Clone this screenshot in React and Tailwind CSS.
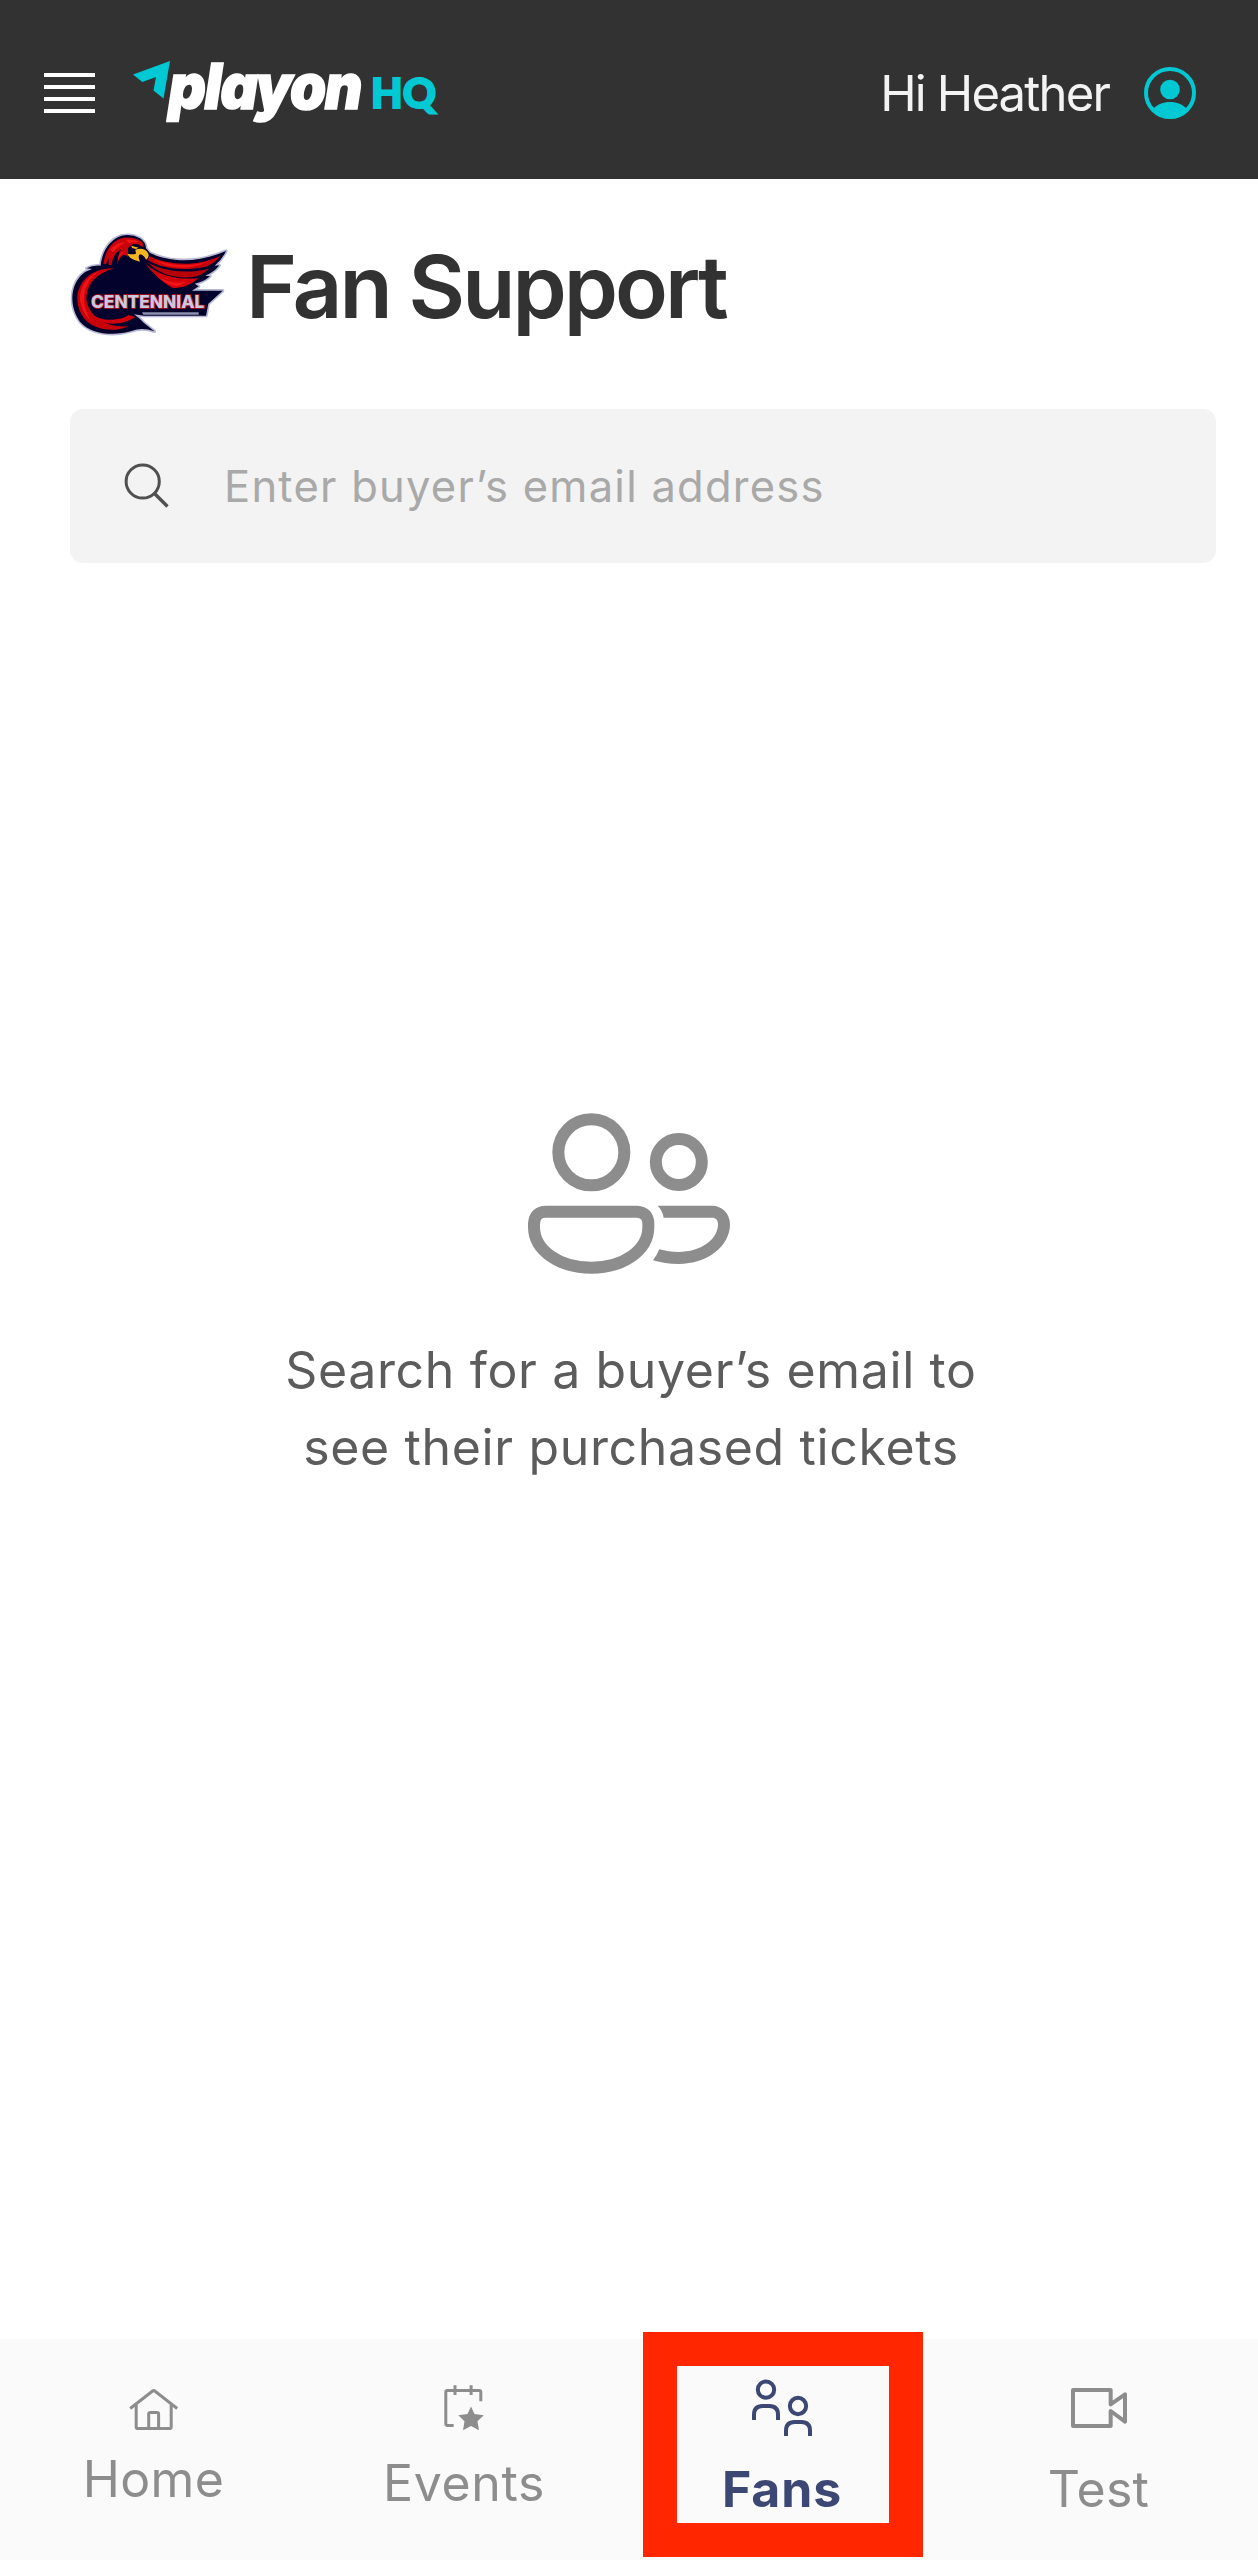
import React from "react";

function PlayonLogo() {
  return (
    <svg className="overflow-visible" width="308" height="100" viewBox="132 42 308 100" role="img" aria-label="playon HQ">
      <path d="M133 73.5 170 60 163.5 97.5 153.5 89.5 156 76 142.3 81Z" fill="#00c9d3" />
      <text
        x="168.500"
        y="0"
        transform="translate(0 108) scale(1 1.080)"
        textLength="194"
        lengthAdjust="spacing"
        className="font-['Inter'] text-[58px] font-black italic"
        fill="#fff"
        stroke="#fff"
        strokeWidth="1.500"
      >
        playon
      </text>
      <text
        x="371"
        y="107"
        textLength="65"
        lengthAdjust="spacing"
        className="font-['Lato'] text-[41px] font-black"
        fill="#00c9d3"
        stroke="#00c9d3"
        strokeWidth="2"
      >
        HQ
      </text>
    </svg>
  );
}

function UserIcon() {
  return (
    <svg width="52" height="52" viewBox="0 0 52 52" fill="#00c9d3">
      <circle cx="26" cy="26" r="24" fill="none" stroke="#00c9d3" strokeWidth="4" />
      <circle cx="26" cy="22.5" r="9.8" />
      <path d="M9 42C17 32.500 35 32.500 43 42C34 54 18 54 9 42Z" />
    </svg>
  );
}

function SchoolLogo() {
  const body =
    "M122 122C126 80 148 44 185 32Q215 26 240 40Q258 52 258 70L270 84C330 112 410 116 498 78Q486 104 464 122L478 121Q462 142 436 152L450 154Q430 172 404 176L416 184L396 197H488L445 236L438 272H252L222 268Q240 280 252 294L283 319Q245 306 215 318C160 334 92 328 60 290C30 248 28 190 62 152Q76 138 96 132L80 130Q98 120 122 122Z";
  return (
    <svg width="180" height="120" viewBox="0 0 540 360" role="img" aria-label="Centennial">
      <path d={body} fill="#b9b9d6" stroke="#b9b9d6" strokeWidth="10" strokeLinejoin="round" />
      <path d={body} fill="#02022c" />
      <path d="M130 116C136 76 156 44 192 38Q222 34 246 50Q252 60 248 66Q236 56 222 56Q208 62 204 70L204 96Q190 80 176 106L172 118Q174 84 184 72Q160 84 154 120H146L146 100 138 118Z" fill="#c8000a" />
      <path d="M150 74Q168 52 200 50Q172 64 160 82ZM196 44Q222 42 236 50L208 54ZM184 82Q176 88 174 104Q184 84 198 78Z" fill="#f01414" />
      <path d="M214 62 236 68 228 72 216 69Z" fill="#f3b21b" />
      <path d="M226 74Q252 66 264 84Q270 96 258 104Q252 90 240 88Q232 92 240 110L226 106Q204 98 203 86Q216 90 228 86Z" fill="#f5b521" />
      <path d="M268 94C330 122 410 126 482 92Q458 120 430 127C370 138 306 132 264 106Z" fill="#c8000a" />
      <path d="M262 112C316 142 380 146 446 132Q424 154 392 157C340 160 300 148 262 112Z" fill="#b80008" />
      <path d="M256 116C300 154 350 164 416 160Q398 174 384 180Q360 192 336 188Q290 160 256 116Z" fill="#d2000a" />
      <path d="M282 104C350 126 400 124 446 108Q400 134 340 126Q306 120 282 104Z" fill="#f01414" />
      <path d="M290 154Q330 178 380 172L350 184Q320 180 290 154Z" fill="#f01414" />
      <path d="M164 130C90 128 52 174 52 222C54 280 96 318 168 314Q196 310 204 304C140 308 92 280 80 228C76 184 104 146 164 130Z" fill="#c8000a" />
      <path d="M120 138C76 154 58 190 60 226Q66 262 90 284Q72 250 72 222C74 180 92 154 120 138Z" fill="#f01414" />
      <path d="M92 266Q120 286 156 284Q190 282 206 270L226 276Q196 296 160 296Q116 296 92 266Z" fill="#d2000a" />
      <path d="M246 262H416V269H250Z" fill="#8f8fb0" />
      <text
        x="93"
        y="250"
        textLength="340"
        lengthAdjust="spacing"
        className="font-['Inter'] text-[52px] font-extrabold"
        fill="#c9c9e0"
        stroke="#b0101c"
        strokeWidth="5"
        paintOrder="stroke"
      >
        CENTENNIAL
      </text>
    </svg>
  );
}

function SearchIcon() {
  return (
    <svg width="46" height="46" viewBox="0 0 46 46" fill="none" stroke="#505050" strokeWidth="3">
      <circle cx="18.700" cy="18.500" r="16.600" />
      <path d="M30.500 30.500 43.500 43.500" strokeWidth="3.400" />
    </svg>
  );
}

function PeopleIcon() {
  return (
    <svg width="202" height="161" viewBox="84 68 606 483" fill="none" stroke="#8d8d8d" strokeWidth="36">
      <circle cx="274" cy="186" r="99" />
      <circle cx="536.500" cy="215" r="69" />
      <path d="M138 364H410Q445 366 445 400V410C445 480 370 532 274 532C178 532 102 480 102 410V400Q104 364 138 364Z" />
      <path
        d="M473 346H636C666 346 690 370 690 402C690 468 622 521 536 521C508 521 482 517 459 510Q470 496 478 477C495 482 515 485 536 485C602 485 654 448 654 402C654 390 648 382 636 382H491Q488 361 473 346Z"
        fill="#8d8d8d"
        stroke="none"
      />
    </svg>
  );
}

function HomeIcon() {
  return (
    <svg width="50" height="48" viewBox="129 2384 50 48" fill="none" stroke="#8d8d8d" strokeWidth="3">
      <path d="M130.200 2408.500 152.600 2391Q153.700 2390.200 154.800 2391L177.200 2408.500" />
      <path d="M136.200 2405V2427Q136.200 2428.600 137.800 2428.600H169.600Q171.200 2428.600 171.200 2427V2405" />
      <path d="M148.700 2428.500V2414Q148.700 2412.400 150.300 2412.400H157Q158.600 2412.400 158.600 2414V2428.500" />
    </svg>
  );
}

function EventsIcon() {
  return (
    <svg width="42" height="48" viewBox="444 2384 42 48" fill="none" stroke="#8d8d8d" strokeWidth="3">
      <path d="M454.600 2425.400H448.400Q446.800 2425.400 446.800 2423.800V2392Q446.800 2390.400 448.400 2390.400H480.200Q481.800 2390.400 481.800 2392V2401.300" />
      <path d="M456 2385.300V2395M472.100 2385.300V2395" />
      <path
        d="M472 2406.500 475.500 2414 484.800 2415.200 478.500 2421.300 480 2430.200 472 2426.100 464 2430.200 465.500 2421.300 459.300 2415.200 468.500 2414Z"
        fill="#8d8d8d"
        stroke="none"
      />
    </svg>
  );
}

function FansIcon() {
  return (
    <svg width="62" height="58" viewBox="45 42 186 174" fill="none" stroke="#3c4774" strokeWidth="12">
      <circle cx="90" cy="74" r="24.500" />
      <circle cx="186" cy="123" r="24.500" />
      <path d="M54 165V149Q54 123 80 123H100Q126 123 126 149V165" />
      <path d="M150 213V197Q150 171 176 171H196Q222 171 222 197V213" />
    </svg>
  );
}

function TestIcon() {
  return (
    <svg width="58" height="42" viewBox="42 36 174 126" fill="none" stroke="#8d8d8d" strokeWidth="12" strokeLinejoin="round">
      <path d="M164 88V45H51V153H164V108L207 140V58Z" />
    </svg>
  );
}

export default function App() {
  return (
    <div className="flex h-[2560px] w-[1258px] flex-col overflow-hidden bg-white font-['Inter',sans-serif]">
      <header className="flex h-[179px] items-center bg-[#323232] pt-[6px] pr-[62px] pl-[44px]">
        <button aria-label="Menu" className="flex w-[51px] flex-col gap-[8px]">
          <span className="h-1 bg-white" />
          <span className="h-1 bg-white" />
          <span className="h-1 bg-white" />
          <span className="h-1 bg-white" />
        </button>
        <div className="ml-[37px]">
          <PlayonLogo />
        </div>
        <div className="ml-auto flex items-center gap-[35px]">
          <span className="pt-[3px] text-[49px] leading-[60px] tracking-[-1.83px] whitespace-nowrap text-[#f3f3f3]">Hi Heather</span>
          <UserIcon />
        </div>
      </header>

      <main className="flex flex-1 flex-col">
        <div className="mt-[46px] ml-[60px] flex h-[120px] items-center gap-[6px]">
          <SchoolLogo />
          <h1 className="pt-[3px] text-[87px] leading-[104px] font-semibold tracking-[-3px] text-[#323232]">Fan Support</h1>
        </div>

        <label className="mt-[64px] ml-[70px] flex h-[154px] w-[1146px] items-center gap-[54px] rounded-[13px] bg-[#f3f3f3] pl-[54px]">
          <SearchIcon />
          <span className="text-[43.5px] leading-[54px] tracking-[1.25px] text-[#a9a9a9]">Enter buyer’s email address</span>
        </label>

        <div className="mt-[550px] flex flex-col items-center">
          <PeopleIcon />
          <p className="mt-[58px] ml-[4px] text-center text-[50px] leading-[76.6px] tracking-[0.64px] text-[#5c5c5c]">
            Search for a buyer’s email to
            <br />
            see their purchased tickets
          </p>
        </div>
      </main>

      <nav className="relative grid h-[221px] grid-cols-[307px_314px_322px_311px] bg-[#fafafa] text-[50px] leading-[60px] text-[#8d8d8d]">
        <a className="flex flex-col items-center pt-[45px]">
          <HomeIcon />
          <span className="mt-[17px] tracking-[0.3px]">Home</span>
        </a>
        <a className="flex flex-col items-center pt-[45px]">
          <EventsIcon />
          <span className="mt-[21px] tracking-[0.65px]">Events</span>
        </a>
        <a className="flex flex-col items-center pt-[40px] font-bold text-[#3c4774]">
          <FansIcon />
          <span className="mt-[22px] tracking-[0.85px]">Fans</span>
        </a>
        <a className="flex flex-col items-center pt-[48px]">
          <TestIcon />
          <span className="mt-[30px] tracking-[0.3px]">Test</span>
        </a>
        <div className="absolute top-[-7px] left-[643px] h-[225px] w-[280px] border-[34px] border-[#ff2600]" />
      </nav>
    </div>
  );
}
